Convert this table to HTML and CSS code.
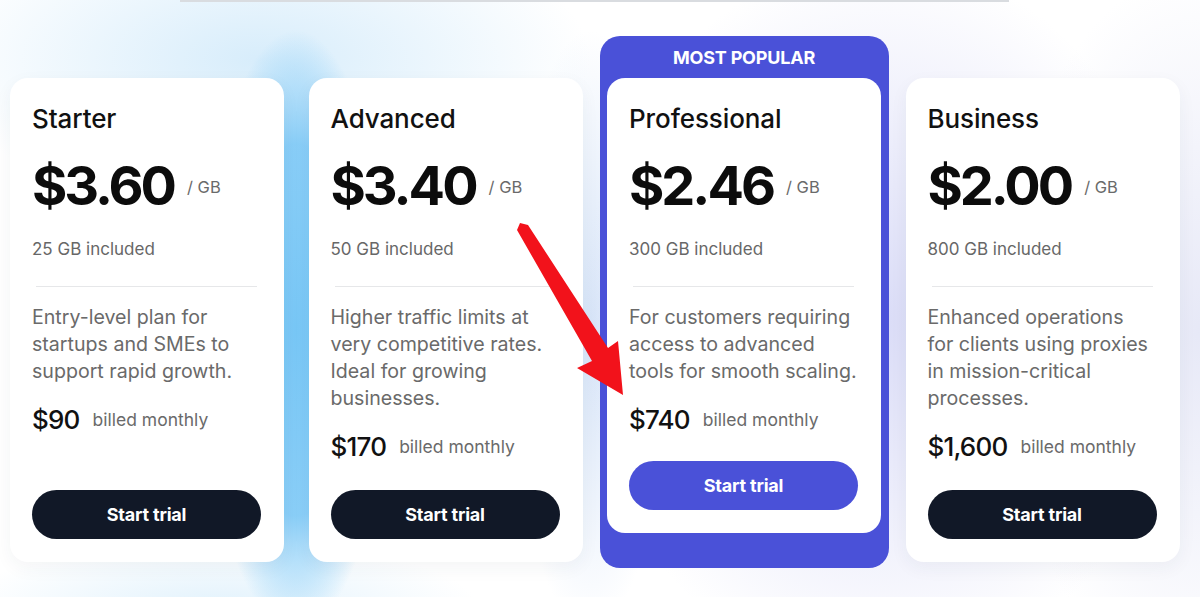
FILE: index.html
```html
<!DOCTYPE html>
<html lang="en">
<head>
<meta charset="utf-8">
<title>Pricing</title>
<link rel="stylesheet" href="styles.css">
</head>
<body>
<div class="topline"></div>
<section class="pricing">
  <article class="card">
    <div class="details">
      <h2 class="name">Starter</h2>
      <div class="price"><span class="amount">$3.60</span><span class="unit">/ GB</span></div>
      <p class="included">25 GB included</p>
      <hr class="divider">
      <p class="desc">Entry-level plan for startups and SMEs to support rapid growth.</p>
      <div class="billed"><span class="total">$90</span><span class="period">billed monthly</span></div>
    </div>
    <button class="btn">Start trial</button>
  </article>

  <article class="card">
    <div class="details">
      <h2 class="name">Advanced</h2>
      <div class="price"><span class="amount">$3.40</span><span class="unit">/ GB</span></div>
      <p class="included">50 GB included</p>
      <hr class="divider">
      <p class="desc">Higher traffic limits at very competitive rates. Ideal for growing businesses.</p>
      <div class="billed"><span class="total">$170</span><span class="period">billed monthly</span></div>
    </div>
    <button class="btn">Start trial</button>
  </article>

  <div class="popular">
    <div class="popular-label">MOST POPULAR</div>
    <article class="card card-pro">
      <div class="details">
        <h2 class="name">Professional</h2>
        <div class="price"><span class="amount">$2.46</span><span class="unit">/ GB</span></div>
        <p class="included">300 GB included</p>
        <hr class="divider">
        <p class="desc">For customers requiring<br>access to advanced<br>tools for smooth scaling.</p>
        <div class="billed"><span class="total">$740</span><span class="period">billed monthly</span></div>
      </div>
      <button class="btn btn-blue">Start trial</button>
    </article>
  </div>

  <article class="card">
    <div class="details">
      <h2 class="name">Business</h2>
      <div class="price"><span class="amount">$2.00</span><span class="unit">/ GB</span></div>
      <p class="included">800 GB included</p>
      <hr class="divider">
      <p class="desc">Enhanced operations<br>for clients using proxies<br>in mission-critical<br>processes.</p>
      <div class="billed"><span class="total">$1,600</span><span class="period">billed monthly</span></div>
    </div>
    <button class="btn">Start trial</button>
  </article>

  <svg class="arrow" width="120" height="180" viewBox="510 215 120 180" aria-hidden="true">
    <polygon fill="#f2121b" points="520,221 528,223 608,346 618,339 623,393 577,366 592,359 517,228"/>
  </svg>
</section>
</body>
</html>
```

FILE: styles.css
```css
* { box-sizing: border-box; }

html, body {
  margin: 0;
  padding: 0;
}

body {
  width: 1200px;
  height: 597px;
  overflow: hidden;
  font-family: "Inter", "Noto Sans", "Liberation Sans", sans-serif;
  color: #111;
  background:
    radial-gradient(ellipse 95px 300px at 296px 330px, rgba(120, 199, 246, 1) 0%, rgba(128, 202, 247, 0.92) 62%, rgba(200, 232, 252, 0) 100%),
    radial-gradient(ellipse 330px 150px at 260px 60px, rgba(205, 232, 250, 0.8) 0%, rgba(225, 241, 252, 0) 100%),
    radial-gradient(ellipse 260px 70px at 220px 610px, rgba(212, 236, 251, 0.7) 0%, rgba(225, 241, 252, 0) 100%),
    radial-gradient(ellipse 300px 360px at 880px 320px, rgba(214, 216, 246, 0.9) 0%, rgba(232, 233, 250, 0) 100%),
    radial-gradient(ellipse 200px 360px at 1200px 330px, rgba(228, 230, 246, 0.9) 0%, rgba(240, 241, 250, 0) 100%),
    radial-gradient(ellipse 80px 300px at 590px 330px, rgba(214, 228, 248, 1) 0%, rgba(235, 241, 250, 0) 100%),
    #ffffff;
}

.topline {
  width: 829px;
  height: 2px;
  margin-left: 180px;
  background: #d9dce0;
}

.pricing {
  position: relative;
  display: flex;
  align-items: flex-start;
  gap: 24.5px;
  padding: 34px 0 0 10px;
}

.card {
  flex: 0 0 274px;
  width: 274px;
  height: 484px;
  margin-top: 42px;
  display: flex;
  flex-direction: column;
  padding: 25px 23px 23px 22px;
  background: #ffffff;
  border-radius: 18px;
  box-shadow: 0 6px 18px rgba(40, 50, 80, 0.05);
}

.details {
  flex: 1;
}

.name {
  margin: 0;
  font-size: 26px;
  line-height: 32px;
  font-weight: 500;
  letter-spacing: -0.1px;
  color: #111;
}

.price {
  display: flex;
  align-items: center;
  gap: 13px;
  margin-top: 23px;
  height: 56px;
}

.amount {
  font-size: 54px;
  line-height: 56px;
  font-weight: 700;
  letter-spacing: -3px;
  color: #0c0c0c;
}

.unit {
  font-size: 16.5px;
  color: #6a6a6a;
  margin-top: 2px;
}

.included {
  margin: 23px 0 0;
  font-size: 17px;
  line-height: 24px;
  color: #676767;
}

.divider {
  margin: 25px 4px 0;
  border: 0;
  height: 1px;
  background: #e6e7e9;
}

.desc {
  margin: 17px -6px 0 0;
  font-size: 19.6px;
  line-height: 27px;
  color: #6a6a6a;
}

.billed {
  display: flex;
  align-items: center;
  gap: 13px;
  margin-top: 19px;
  height: 30px;
}

.total {
  font-size: 26px;
  font-weight: 500;
  letter-spacing: -0.8px;
  color: #111;
}

.period {
  font-size: 17.5px;
  color: #6a6a6a;
}

.btn {
  display: block;
  width: 100%;
  height: 49px;
  margin-top: 27px;
  border: 0;
  border-radius: 25px;
  background: #111827;
  color: #ffffff;
  font-family: inherit;
  font-size: 18px;
  font-weight: 700;
  letter-spacing: -0.2px;
}

.btn-blue {
  background: #4a51d8;
}

.popular {
  flex: 0 0 289px;
  width: 289px;
  margin: 0 -8px 0 -7px;
  padding: 0 8px 35px 7px;
  background: #4a51d8;
  border-radius: 20px;
}

.popular-label {
  height: 42px;
  display: flex;
  align-items: center;
  justify-content: center;
  padding-top: 1px;
  color: #ffffff;
  font-size: 18px;
  font-weight: 700;
  letter-spacing: -0.2px;
}

.card-pro {
  width: 274px;
  height: auto;
  margin-top: 0;
  box-shadow: none;
  border-radius: 18px;
}

.arrow {
  position: absolute;
  left: 510px;
  top: 215px;
  pointer-events: none;
}
```
